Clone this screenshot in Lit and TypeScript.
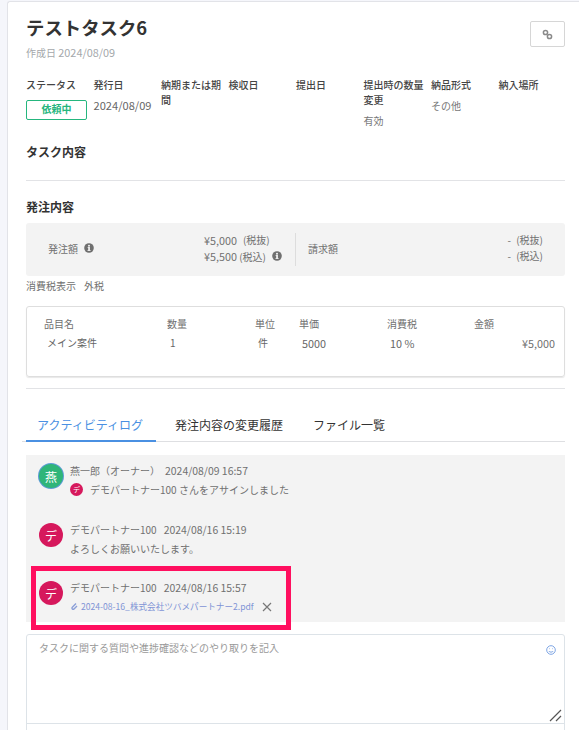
import { LitElement, html, css } from "lit";
import { customElement } from "lit/decorators.js";

const info = html`<svg class="info" viewBox="0 0 10 10"><circle cx="5" cy="5" r="4.8" fill="#6f6f6f"/><rect x="4.2" y="4.2" width="1.7" height="3.6" fill="#f3f3f3"/><rect x="3.6" y="4.1" width="2.2" height=".8" fill="#f3f3f3"/><rect x="3.5" y="7.1" width="3.1" height=".8" fill="#f3f3f3"/><circle cx="5" cy="2.8" r="1" fill="#f3f3f3"/></svg>`;

@customElement("app-root")
export class AppRoot extends LitElement {
  static styles = css`
    :host { display: block; height: 730px; overflow: hidden; background: #f5f6fb; font-family: "Noto Sans CJK JP", "Noto Sans", sans-serif; font-size: 10px; color: #707070; }
    * { box-sizing: border-box; }
    .card { position: relative; margin: 1px 0 0 7px; height: 729px; background: #fff; border: 1px solid #e2e3e8; border-right: 0; border-bottom: 0; border-radius: 3px 0 0 0; padding: 0 14px 0 18px; }
    .head { display: flex; justify-content: space-between; height: 58px; }
    h1 { margin: 12px 0 0; font-size: 18.4px; line-height: 26px; font-weight: 700; color: #333; }
    .created { margin-top: 4px; line-height: 16px; color: #a4a8ab; font-size: 10px; }
    .created .num { font-size: 10.9px; }
    .link { width: 35px; height: 26px; margin-top: 19px; border: 1px solid #d6d6d6; border-radius: 2px; display: flex; align-items: center; justify-content: center; }
    .link svg { width: 11px; height: 11px; }
    .meta { display: grid; grid-template-columns: repeat(8, 67.5px); margin-top: 17px; height: 57px; }
    .meta b { display: block; font-weight: 500; color: #444; line-height: 15px; padding-right: 2px; }
    .meta span { display: block; line-height: 17px; margin-top: 5px; color: #777; }
    .meta .date { color: #666; font-size: 11.1px; white-space: nowrap; }
    .badge { width: 61px; height: 20px; margin-top: 8px; border: 1px solid #25b67e; border-radius: 2px; color: #25b67e; font-weight: 700; text-align: center; line-height: 15px; }
    h2 { margin: 0; font-size: 12px; font-weight: 700; color: #333; line-height: 18px; }
    .t1 { margin-top: 9px; }
    hr { border: 0; border-top: 1px solid #e2e3e6; margin: 0; }
    .hr1 { margin-top: 19px; }
    .t2 { margin-top: 17px; }
    .sum { margin-top: 7px; height: 53px; background: #f3f3f3; border-radius: 3px; display: flex; align-items: center; padding: 0 22px 3px 22px; }
    .sum .label { display: flex; align-items: center; gap: 6px; width: 155px; }
    .sum .vals { width: 91px; margin-left: 1px; display: flex; flex-direction: column; line-height: 16px; }
    .sum .row { display: flex; align-items: center; gap: 6px; white-space: nowrap; }
    .num { font-size: 10.8px; }
    .sep { width: 1px; height: 33px; background: #ddd; margin: 3px 12px 0 0; }
    .sum .bill { flex: 1; }
    .sum .right { line-height: 16px; text-align: right; word-spacing: 3px; }
    .info { width: 10px; height: 10px; flex: none; }
    .tax { margin-top: 1px; line-height: 17px; display: flex; gap: 8px; }
    .table { margin-top: 12px; height: 71px; border: 1px solid #dedede; border-radius: 3px; box-shadow: 0 1px 1px #e8e8e8; padding: 7px 9px 0 17px; display: grid; grid-template-columns: 123px 88px 44px 88px 87px 1fr; grid-auto-rows: 19px; align-items: center; }
    .table .v { padding-left: 3px; color: #666; }
    .table .yen { text-align: right; }
    .hr2 { margin-top: 11px; }
    .tabs { margin: 19px 0 0 -4px; height: 34px; display: flex; border-bottom: 1px solid #dedfe2; font-size: 12px; color: #333; }
    .tab { line-height: 34px; height: 34px; white-space: nowrap; }
    .tab.on { color: #4a90e2; border-bottom: 2px solid #4a90e2; margin-left: 4px; padding: 0 11px; width: 130px; }
    .tab.second { margin-left: 19px; width: 138px; }
    .log { margin-top: 13px; height: 167px; background: #f3f3f3; position: relative; }
    .msg { position: absolute; left: 13px; display: flex; gap: 7px; }
    .av { width: 24px; height: 24px; border-radius: 50%; background: #d6185c; color: #fff; font-size: 12px; display: flex; align-items: center; justify-content: center; margin-top: 2px; flex: none; }
    .av.g { background: #2fb579; box-shadow: 0 0 0 1px #5b9bd5; }
    .who { line-height: 17px; white-space: nowrap; display: flex; gap: 7px; }
    .who.tight { gap: 5px; }
    .who .time { font-size: 10.45px; }
    .text { margin-top: 2px; line-height: 17px; white-space: nowrap; display: flex; align-items: center; gap: 7px; }
    .mini { width: 13px; height: 13px; border-radius: 50%; background: #d6185c; color: #fff; font-size: 7px; display: flex; align-items: center; justify-content: center; }
    .file { color: #7f93d6; font-size: 8.6px; gap: 3px; }
    .clip { width: 8px; height: 9px; }
    .x { width: 10px; height: 10px; margin-left: 5px; }
    .mark { position: absolute; left: 23px; top: 564px; width: 260px; height: 64px; border: 5px solid #ff0f5f; }
    .box { margin-top: 12px; height: 120px; border: 1px solid #dde3e8; border-radius: 3px 3px 0 0; position: relative; }
    .area { height: 89px; border-bottom: 1px solid #dde3e8; padding: 4px 12px; line-height: 17px; color: #999; position: relative; }
    .smile { position: absolute; right: 8px; top: 10px; width: 10px; height: 10px; }
    .grip { position: absolute; right: 2px; bottom: 1px; width: 13px; height: 13px; }
  `;
  render() {
    return html`<div class="card">
      <div class="head">
        <div><h1>テストタスク6</h1><div class="created">作成日 <span class="num">2024/08/09</span></div></div>
        <div class="link"><svg viewBox="0 0 11 11" fill="none" stroke="#8a8a8a" stroke-width="1.5"><circle cx="3.5" cy="3.5" r="2.1"/><circle cx="7.5" cy="7.5" r="2.1"/></svg></div>
      </div>
      <div class="meta">
        <div><b>ステータス</b><div class="badge">依頼中</div></div>
        <div><b>発行日</b><span class="date">2024/08/09</span></div>
        <div><b>納期または期間</b></div>
        <div><b>検収日</b></div>
        <div><b>提出日</b></div>
        <div><b>提出時の数量変更</b><span>有効</span></div>
        <div><b>納品形式</b><span>その他</span></div>
        <div><b>納入場所</b></div>
      </div>
      <h2 class="t1">タスク内容</h2>
      <hr class="hr1" />
      <h2 class="t2">発注内容</h2>
      <div class="sum">
        <div class="label">発注額 ${info}</div>
        <div class="vals"><div class="row"><span class="num">¥5,000</span> (税抜)</div><div class="row"><span><span class="num">¥5,500</span> (税込)</span> ${info}</div></div>
        <div class="sep"></div>
        <div class="bill">請求額</div>
        <div class="right"><div>- (税抜)</div><div>- (税込)</div></div>
      </div>
      <div class="tax"><span>消費税表示</span><span>外税</span></div>
      <div class="table">
        <div>品目名</div><div>数量</div><div>単位</div><div>単価</div><div>消費税</div><div>金額</div>
        <div class="v">メイン案件</div><div class="v">1</div><div class="v">件</div><div class="v num">5000</div><div class="v num">10 %</div><div class="yen num">¥5,000</div>
      </div>
      <hr class="hr2" />
      <div class="tabs"><div class="tab on">アクティビティログ</div><div class="tab second">発注内容の変更履歴</div><div class="tab">ファイル一覧</div></div>
      <div class="log">
        <div class="msg" style="top:7px">
          <div class="av g">燕</div>
          <div><div class="who tight"><span>燕一郎（オーナー）</span><span class="time">2024/08/09 16:57</span></div>
          <div class="text"><span class="mini">デ</span><span>デモパートナー100 さんをアサインしました</span></div></div>
        </div>
        <div class="msg" style="top:66px">
          <div class="av">デ</div>
          <div><div class="who"><span>デモパートナー100</span><span class="time">2024/08/16 15:19</span></div>
          <div class="text">よろしくお願いいたします。</div></div>
        </div>
        <div class="msg" style="top:124px">
          <div class="av">デ</div>
          <div><div class="who"><span>デモパートナー100</span><span class="time">2024/08/16 15:57</span></div>
          <div class="text file"><svg class="clip" viewBox="0 0 7 9" fill="none" stroke="#8b9fd8" stroke-width="1.4"><path d="M5.500 1.500 1.800 5.200a1.200 1.200 0 0 0 1.700 1.700l3-3"/></svg><span>2024-08-16_株式会社ツバメパートナー2.pdf</span><svg class="x" viewBox="0 0 10 10" stroke="#777" stroke-width="1.200"><path d="M1 1l8 8M9 1l-8 8"/></svg></div></div>
        </div>
      </div>
      <div class="mark"></div>
      <div class="box">
        <div class="area">タスクに関する質問や進捗確認などのやり取りを記入
          <svg class="smile" viewBox="0 0 10 10" fill="none" stroke="#6f9be0" stroke-width=".9"><circle cx="5" cy="5" r="4.300"/><path d="M2.800 6c.5 1.500 3.900 1.500 4.400 0M3.300 3.700h.6M6.100 3.700h.6"/></svg>
          <svg class="grip" viewBox="0 0 13 13" stroke="#555" stroke-width="1.200" fill="none"><path d="M1 12L12 1M7 12l5-5"/></svg>
        </div>
      </div>
    </div>`;
  }
}
